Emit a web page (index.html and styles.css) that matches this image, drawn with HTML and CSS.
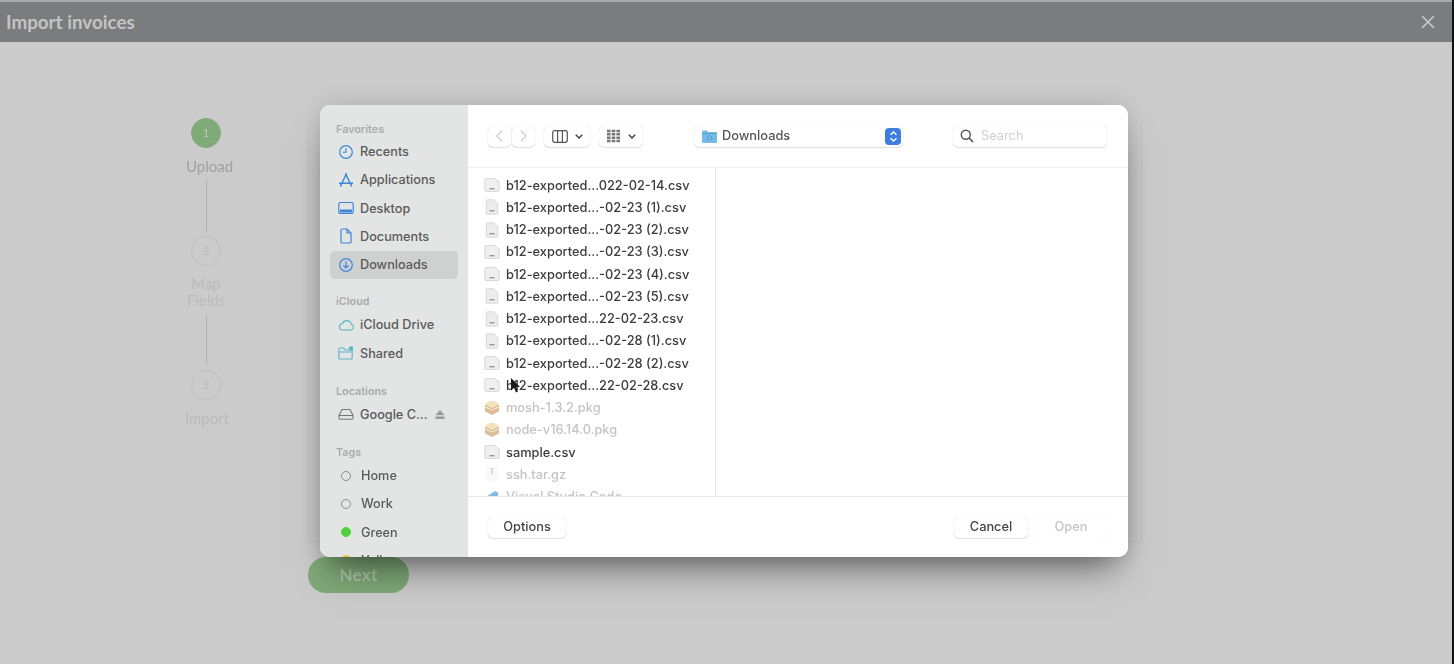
FILE: index.html
```html
<!DOCTYPE html>
<html lang="en">
<head>
<meta charset="utf-8">
<title>Import invoices</title>
<link rel="stylesheet" href="styles.css">
</head>
<body>
<svg class="defs" width="0" height="0" aria-hidden="true">
  <symbol id="doc" viewBox="0 0 16 16"><path d="M.8 3Q.8 1.500 2.300 1.500h8.200l4.700 3.500v8q0 1.500-1.500 1.500H2.300Q.8 14.500.8 13z" fill="#efefef" stroke="#cfcfcf" stroke-width=".8"/><path d="M5.500 11.800h5" stroke="#777" stroke-width="1"/></symbol>
  <symbol id="docn" viewBox="0 0 16 16"><path d="M2.300 1.800Q2.300.8 3.300.8h6.700l3.700 3.700v9.700q0 1-1 1H3.300q-1 0-1-1z" fill="#ececec" stroke="#d2d2d2" stroke-width=".8"/><path d="M5.500 11.800h5" stroke="#777" stroke-width="1"/></symbol>
  <symbol id="pkg" viewBox="0 0 16 16"><path d="M1 4.500Q4 1 8 1t7 3.500v7L8 15l-7-3.500z" fill="#cfa878"/><path d="M1 4.500Q4 1 8 1t7 3.500L8 8z" fill="#f0dca8"/><path d="M1 6l7 3.500L15 6v1.500L8 10.500 1 7.500z" fill="#f3e3b8"/></symbol>
  <symbol id="zip" viewBox="0 0 16 16"><path d="M2.300 1.800Q2.300.8 3.300.8h9.400q1 0 1 1v12.400q0 1-1 1H3.300q-1 0-1-1z" fill="#f6f6f6"/><path d="M8 2v6" stroke="#bbb" stroke-width="2" stroke-dasharray="1.500 .8"/></symbol>
  <symbol id="app" viewBox="0 0 16 16"><path d="M2 8l9-6 3 1.500v9L11 14 2 9z" fill="#5ba4de"/></symbol>
</svg>
<div class="page">
  <header class="topbar">
    <h1 class="title">Import invoices</h1>
    <svg class="close" viewBox="0 0 14 14" width="14" height="14"><path d="M1 1l12 12M13 1L1 13" stroke="#c9caca" stroke-width="1.600" fill="none"/></svg>
  </header>
  <main class="wizard">
    <nav class="steps">
      <div class="dot dot-on">1</div>
      <div class="step-label step-label-on">Upload</div>
      <div class="rule rule-a"></div>
      <div class="dot">2</div>
      <div class="step-label step-label-two">Map<br>Fields</div>
      <div class="rule rule-b"></div>
      <div class="dot">3</div>
      <div class="step-label step-label-three">Import</div>
    </nav>
    <section class="body-col">
      <div class="card"></div>
      <button class="next">Next</button>
    </section>
  </main>
</div>

<div class="dialog">
  <aside class="side">
    <h2 class="side-h side-h-first">Favorites</h2>
    <div class="side-item"><svg class="si" viewBox="0 0 16 16"><circle cx="8" cy="8" r="6.300" fill="none" stroke="#3d86d8" stroke-width="1.200"/><path d="M8 4v4.300H4.800" fill="none" stroke="#3d86d8" stroke-width="1.100"/></svg>Recents</div>
    <div class="side-item"><svg class="si" viewBox="0 0 16 16"><path d="M8.500 1.500L4 11M7.500 1.500L12 11M1 11.200h14M3.500 11.500l-1 3M12.500 11.500l1 3" fill="none" stroke="#3d86d8" stroke-width="1.500"/></svg>Applications</div>
    <div class="side-item"><svg class="si" viewBox="0 0 16 16"><rect x=".8" y="2.500" width="14.400" height="11" rx="1.600" fill="none" stroke="#3d86d8" stroke-width="1.200"/><rect x="2" y="9.500" width="12" height="3" fill="#3d86d8"/></svg>Desktop</div>
    <div class="side-item"><svg class="si" viewBox="0 0 16 16"><path d="M3 2.300Q3 1 4.300 1h4.700L13 5v8.700Q13 15 11.700 15H4.300Q3 15 3 13.700zM9 1v4h4" fill="none" stroke="#3d86d8" stroke-width="1.200"/></svg>Documents</div>
    <div class="side-item side-item-on"><svg class="si" viewBox="0 0 16 16"><circle cx="8" cy="8" r="6.300" fill="none" stroke="#3d86d8" stroke-width="1.200"/><path d="M8 4.300v6.500M5.300 8.300L8 11l2.700-2.700" fill="none" stroke="#3d86d8" stroke-width="1.200"/></svg>Downloads</div>
    <h2 class="side-h side-h-cloud">iCloud</h2>
    <div class="side-item"><svg class="si" viewBox="0 0 16 16"><path d="M4 13h8.500a3 3 0 0 0 .6-5.900A4.500 4.500 0 0 0 4.500 6.500 3.300 3.300 0 0 0 4 13z" fill="none" stroke="#5cb6c4" stroke-width="1.100"/></svg>iCloud Drive</div>
    <div class="side-item"><svg class="si" viewBox="0 0 16 16"><path d="M.8 4.500V13q0 1 1 1h11.400q1 0 1-1V6q0-1-1-1H7L5.800 3H1.800q-1 0-1 1.500zM.8 7h14" fill="none" stroke="#5cb6c4" stroke-width="1.100"/><circle cx="13" cy="3.500" r="2.300" fill="#5cb6c4"/></svg>Shared</div>
    <h2 class="side-h">Locations</h2>
    <div class="side-item"><svg class="si" viewBox="0 0 16 16"><path d="M1 9.500L4 3.500h8l3 6v2.500q0 1.200-1.200 1.200H2.200Q1 13.200 1 12zM1 9.500h14" fill="none" stroke="#777" stroke-width="1.100"/></svg>Google C...<svg class="eject" viewBox="0 0 10 9"><path d="M5 0l4.500 5.200h-9zM.5 6.500h9V9h-9z" fill="#9a9a9a"/></svg></div>
    <h2 class="side-h">Tags</h2>
    <div class="side-item"><span class="tag"></span>Home</div>
    <div class="side-item"><span class="tag"></span>Work</div>
    <div class="side-item"><span class="tag tag-green"></span>Green</div>
    <div class="side-item"><span class="tag tag-yellow"></span>Yellow</div>
  </aside>
  <div class="pane">
    <div class="toolbar">
      <div class="nav-pair">
        <button class="tb tb-nav"><svg viewBox="0 0 8 14" width="7" height="12"><path d="M7 1L1 7l6 6" fill="none" stroke="#bdbdbd" stroke-width="1.200"/></svg></button>
        <button class="tb tb-nav"><svg viewBox="0 0 8 14" width="7" height="12"><path d="M1 1l6 6-6 6" fill="none" stroke="#bdbdbd" stroke-width="1.200"/></svg></button>
      </div>
      <button class="tb tb-view"><svg viewBox="0 0 16 13" width="16" height="13"><rect x=".7" y=".7" width="14.600" height="11.600" rx="2" fill="none" stroke="#555" stroke-width="1.200"/><path d="M5.600 1v11M10.400 1v11" stroke="#555" stroke-width="1.200"/></svg><svg viewBox="0 0 8 5" width="8" height="5"><path d="M.8.800L4 4 7.200.8" fill="none" stroke="#444" stroke-width="1.500"/></svg></button>
      <button class="tb tb-group"><svg viewBox="0 0 15 14" width="15" height="14"><path d="M1 2h13M1 5.300h13M1 8.700h13M1 12h13" stroke="#777" stroke-width="2.600" stroke-dasharray="3.600 1.100" fill="none"/></svg><svg viewBox="0 0 8 5" width="8" height="5"><path d="M.8.800L4 4 7.200.8" fill="none" stroke="#444" stroke-width="1.500"/></svg></button>
      <div class="tb path">
        <svg viewBox="0 0 15 13" width="15" height="13"><path d="M0 1.500Q0 .5 1 .5h4l1 1.500h8q1 0 1 1V12q0 1-1 1H1q-1 0-1-1z" fill="#74bce6"/><path d="M0 3.500h15" stroke="#4f9ed0" stroke-width=".8"/><circle cx="7.500" cy="8" r="2.200" fill="none" stroke="#4f9ed0" stroke-width=".9"/></svg>
        <span class="path-name">Downloads</span>
        <span class="stepper"><svg viewBox="0 0 9 13" width="9" height="13"><path d="M1.500 4.800L4.500 2l3 2.800M1.500 8.200l3 2.800 3-2.800" fill="none" stroke="#fff" stroke-width="1.300"/></svg></span>
      </div>
      <div class="tb search">
        <svg viewBox="0 0 14 14" width="14" height="14"><circle cx="5.800" cy="5.800" r="4.500" fill="none" stroke="#555" stroke-width="1.400"/><path d="M9 9l4 4" stroke="#555" stroke-width="1.700"/></svg>
        <span class="search-ph">Search</span>
      </div>
    </div>
    <div class="browser">
      <ul class="files">
        <li class="file"><svg class="fi"><use href="#doc"/></svg>b12-exported...022-02-14.csv</li>
        <li class="file"><svg class="fi"><use href="#docn"/></svg>b12-exported...-02-23 (1).csv</li>
        <li class="file"><svg class="fi"><use href="#docn"/></svg>b12-exported...-02-23 (2).csv</li>
        <li class="file"><svg class="fi"><use href="#doc"/></svg>b12-exported...-02-23 (3).csv</li>
        <li class="file"><svg class="fi"><use href="#doc"/></svg>b12-exported...-02-23 (4).csv</li>
        <li class="file"><svg class="fi"><use href="#docn"/></svg>b12-exported...-02-23 (5).csv</li>
        <li class="file"><svg class="fi"><use href="#docn"/></svg>b12-exported...22-02-23.csv</li>
        <li class="file"><svg class="fi"><use href="#docn"/></svg>b12-exported...-02-28 (1).csv</li>
        <li class="file"><svg class="fi"><use href="#doc"/></svg>b12-exported...-02-28 (2).csv</li>
        <li class="file"><svg class="fi"><use href="#doc"/></svg>b12-exported...22-02-28.csv</li>
        <li class="file file-off"><svg class="fi"><use href="#pkg"/></svg>mosh-1.3.2.pkg</li>
        <li class="file file-off"><svg class="fi"><use href="#pkg"/></svg>node-v16.14.0.pkg</li>
        <li class="file"><svg class="fi"><use href="#doc"/></svg>sample.csv</li>
        <li class="file file-off"><svg class="fi"><use href="#zip"/></svg>ssh.tar.gz</li>
        <li class="file file-off"><svg class="fi"><use href="#app"/></svg>Visual Studio Code</li>
      </ul>
      <div class="preview"></div>
    </div>
    <div class="footer">
      <button class="tb btn btn-options">Options</button>
      <div class="footer-right">
        <button class="tb btn btn-cancel">Cancel</button>
        <button class="tb btn btn-off">Open</button>
      </div>
    </div>
  </div>
</div>
<svg class="cursor" viewBox="0 0 10 16" width="10" height="16"><path d="M1 0v12.500l3-2.800 2 4.800 2-1-2-4.500h4z" fill="#1c1c1c"/></svg>
</body>
</html>
```
FILE: styles.css
```css
* { box-sizing: border-box; }
html, body { margin: 0; height: 100%; }
body { background: #cbcbcb; overflow: hidden; font-family: Inter, "Liberation Sans", sans-serif; }
.defs { position: absolute; }
.page { height: 664px; display: flex; flex-direction: column; border-right: 2px solid #111; filter: blur(.5px); }
.topbar { height: 42px; background: #7b7c7d; border-top: 2px solid #a9a9a9; display: flex; align-items: center; justify-content: space-between; padding: 0 17px 0 6px; flex: none; }
.title { margin: 0; font: 700 18.800px/1 Lato, sans-serif; color: #c3c4c4; }
.wizard { display: flex; flex: 1; }
.steps { width: 308px; padding: 76px 0 0 104px; display: flex; flex-direction: column; align-items: center; }
.dot { width: 30px; height: 30px; border-radius: 50%; border: 1.500px solid #bebebe; color: #bababa; font: 12px/27px Lato, sans-serif; text-align: center; flex: none; }
.dot-on { background: #80ab78; border-color: #80ab78; color: #b5cdb0; }
.step-label { font: 15px/17px Lato, sans-serif; color: #bababa; text-align: center; white-space: nowrap; }
.step-label-on { color: #a0a0a0; margin: 10px 0 0 7px; }
.step-label-two { margin-top: 9px; }
.step-label-three { margin: 10px 0 0 2px; }
.rule { width: 1px; background: #b0b0b0; flex: none; }
.rule-a { height: 51px; margin: 5px 0; }
.rule-b { height: 49px; margin: 6px 0; }
.body-col { width: 834px; padding-top: 81px; }
.card { height: 419px; background: #cbcbcb; border: 1px solid #c2c2c2; border-top: 0; }
.next { display: block; margin-top: 15px; width: 101px; height: 36px; border: 0; border-radius: 18px; background: #7fa878; color: #adc5a8; font: 700 17px/36px Lato, sans-serif; letter-spacing: .3px; padding: 0; }

.dialog { position: absolute; left: 320px; top: 105px; width: 808px; height: 452px; border-radius: 10px; overflow: hidden; background: #fff; display: flex; box-shadow: 0 22px 34px -12px rgba(0,0,0,.5), 0 0 22px rgba(0,0,0,.14); }
.side { width: 148px; flex: none; background: #e3e5e4; padding: 0 10px; font-size: 12.700px; filter: blur(.4px); }
.side-h { margin: 0; padding-left: 6px; font: 600 10.800px/14px Inter, sans-serif; color: #a9abaa; }
.side-h-first { padding-top: 18px; margin-bottom: 0.500px; }
.side-h:not(.side-h-first) { margin-top: 17.500px; margin-bottom: 1.500px; }
.side-h.side-h-cloud { margin-top: 16.500px; }
.side-item { height: 28.250px; display: flex; align-items: center; gap: 6px; padding-left: 8px; border-radius: 5px; color: #5a5a5a; white-space: nowrap; font-weight: 500; }
.side-item-on { background: #cfd1d0; }
.si { width: 16px; height: 16px; flex: none; }
.eject { width: 10px; height: 9px; margin-left: 1px; }
.tag { width: 10px; height: 10px; margin: 0 4px 0 3px; border-radius: 50%; border: 1.300px solid #8a8a8a; flex: none; }
.tag-green { background: #4fd03c; border-color: #4fd03c; }
.tag-yellow { background: #e8c33a; border-color: #e8c33a; }
.pane { flex: 1; display: flex; flex-direction: column; min-width: 0; filter: blur(.4px); background: #fff; }
.toolbar { height: 63px; flex: none; border-bottom: 1px solid #eeeeee; display: flex; align-items: center; padding: 0 21px 0 20px; }
.tb { height: 21px; background: #fff; border: 0; border-radius: 5px; box-shadow: 0 0 1px rgba(0,0,0,.25), 0 1px 1px rgba(0,0,0,.1); display: flex; align-items: center; justify-content: center; padding: 0; font: 500 12.800px/1 Inter, sans-serif; color: #444; }
.nav-pair { display: flex; gap: 1px; }
.tb-nav { width: 23px; }
.tb-view { width: 46px; margin-left: 9px; gap: 7px; }
.tb-group { width: 44px; margin-left: 9px; gap: 7px; }
.path { width: 209px; margin-left: 51px; justify-content: flex-start; padding: 0 2px 0 8px; gap: 5px; }
.path-name { flex: 1; color: #555; }
.stepper { width: 16px; height: 17px; border-radius: 4px; background: #3d7de0; display: flex; align-items: center; justify-content: center; }
.search { width: 154px; margin-left: 50px; justify-content: flex-start; padding-left: 7px; gap: 7px; }
.search-ph { color: #cfcfcf; font-weight: 400; }
.browser { height: 329px; flex: none; display: flex; border-bottom: 1px solid #e8e8e8; overflow: hidden; }
.files { width: 248px; flex: none; margin: 0; padding: 6px 0 0 16px; list-style: none; border-right: 1px solid #e9e9e9; }
.file { height: 22.250px; display: flex; align-items: center; gap: 6px; font-size: 12.800px; font-weight: 500; color: #3c3c3c; white-space: nowrap; }
.file-off { color: #c4c4c4; }
.file-off .fi { opacity: .75; }
.fi { width: 16px; height: 16px; flex: none; }
.preview { flex: 1; }
.footer { flex: 1; display: flex; align-items: center; justify-content: space-between; padding: 1px 21px 0 20px; }
.footer-right { display: flex; gap: 7px; }
.btn { height: 21px; }
.btn-options { width: 78px; }
.btn-cancel { width: 74px; }
.btn-off { width: 72px; color: #c6c6c6; box-shadow: 0 0 1px rgba(0,0,0,.12); }
.cursor { position: absolute; left: 510px; top: 378px; }
```
